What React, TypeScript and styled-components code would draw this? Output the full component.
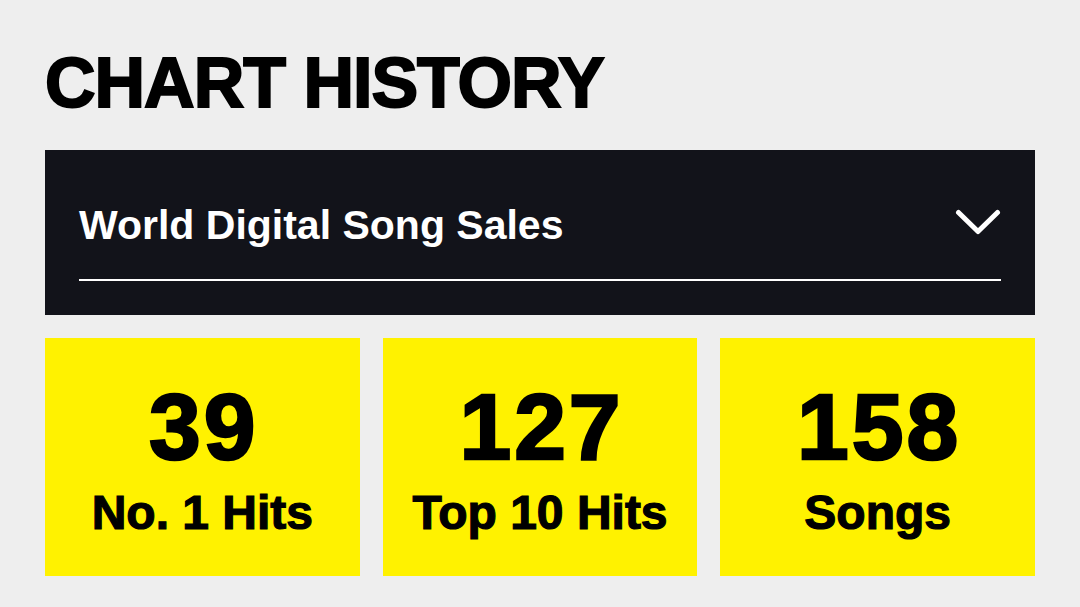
import React from 'react'
import styled, { createGlobalStyle } from 'styled-components'

const colors = {
  page: '#eeeeee',
  dark: '#12131a',
  white: '#ffffff',
  yellow: '#fff200',
  ink: '#000000',
}

const GlobalStyle = createGlobalStyle`
  html, body {
    margin: 0;
    padding: 0;
    background: ${colors.page};
  }
  body {
    font-family: 'Liberation Sans', Arial, sans-serif;
    color: ${colors.ink};
  }
`

const Section = styled.section`
  width: 990px;
  padding: 48px 45px 0;
`

const Title = styled.h2`
  margin: 0 0 32px;
  font-size: 70px;
  line-height: 70px;
  font-weight: 700;
  letter-spacing: -1px;
  -webkit-text-stroke: 2px ${colors.ink};
  text-transform: uppercase;
`

const ChartPicker = styled.div`
  background: ${colors.dark};
  padding: 55px 34px 34px;
`

const Select = styled.div`
  display: flex;
  align-items: center;
  justify-content: space-between;
  padding-bottom: 33px;
  border-bottom: 2px solid ${colors.white};
  cursor: pointer;
`

const SelectLabel = styled.span`
  color: ${colors.white};
  font-size: 41px;
  line-height: 41px;
  font-weight: 700;
`

const Chevron = styled.svg`
  display: block;
  margin-top: -6px;
`

const Stats = styled.div`
  display: grid;
  grid-template-columns: repeat(3, 1fr);
  gap: 23px;
  margin-top: 23px;
`

const StatCard = styled.div`
  background: ${colors.yellow};
  height: 238px;
  box-sizing: border-box;
  padding-top: 43px;
  display: flex;
  flex-direction: column;
  align-items: center;
  text-align: center;
`

const StatValue = styled.div`
  font-size: 93px;
  line-height: 93px;
  font-weight: 700;
  letter-spacing: 3px;
  margin-right: -3px;
  -webkit-text-stroke: 2.5px ${colors.ink};
`

const StatLabel = styled.div`
  margin-top: 15px;
  font-size: 48px;
  line-height: 48px;
  font-weight: 700;
  -webkit-text-stroke: 1.2px ${colors.ink};
  white-space: nowrap;
`

const stats = [
  { value: 39, label: 'No. 1 Hits' },
  { value: 127, label: 'Top 10 Hits' },
  { value: 158, label: 'Songs' },
]

const App = () => {
  return (
    <>
      <GlobalStyle />
      <Section>
        <Title>Chart History</Title>
        <ChartPicker>
          <Select>
            <SelectLabel>World Digital Song Sales</SelectLabel>
            <Chevron width="46" height="27" viewBox="0 0 46 27">
              <path
                d="M3.5 3.5 L23 22.5 L42.5 3.5"
                fill="none"
                stroke={colors.white}
                strokeWidth="5"
                strokeLinecap="round"
                strokeLinejoin="round"
              />
            </Chevron>
          </Select>
        </ChartPicker>
        <Stats>
          {stats.map((s) => (
            <StatCard key={s.label}>
              <StatValue>{s.value}</StatValue>
              <StatLabel>{s.label}</StatLabel>
            </StatCard>
          ))}
        </Stats>
      </Section>
    </>
  )
}

export default App
